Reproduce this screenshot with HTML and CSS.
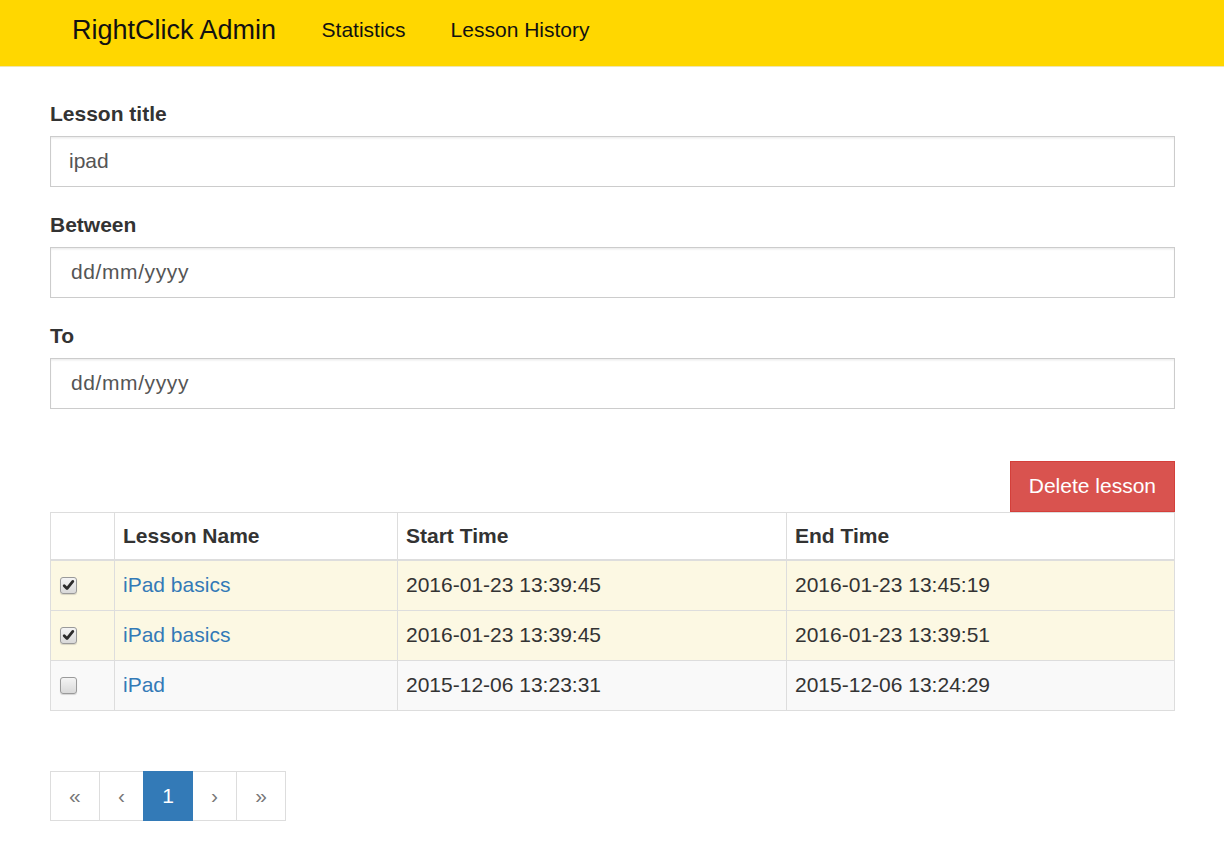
FILE: index.html
```html
<!DOCTYPE html>
<html lang="en">
<head>
<meta charset="utf-8">
<title>RightClick Admin - Lesson History</title>
<link rel="stylesheet" href="styles.css">
</head>
<body>
<nav class="navbar">
  <div class="container navbar-inner">
    <a class="brand" href="#">RightClick Admin</a>
    <a class="nav-link" href="#">Statistics</a>
    <a class="nav-link" href="#">Lesson History</a>
  </div>
</nav>

<main class="container content">
  <form class="search-form">
    <div class="form-group">
      <label class="form-label" for="title">Lesson title</label>
      <input class="form-control" id="title" type="text" value="ipad">
    </div>
    <div class="form-group">
      <label class="form-label" for="between">Between</label>
      <input class="form-control date" id="between" type="text" placeholder="dd/mm/yyyy">
    </div>
    <div class="form-group">
      <label class="form-label" for="to">To</label>
      <input class="form-control date" id="to" type="text" placeholder="dd/mm/yyyy">
    </div>
  </form>

  <div class="actions">
    <button class="btn-danger" type="button">Delete lesson</button>
  </div>

  <table class="lessons">
    <thead>
      <tr>
        <th class="col-check"></th>
        <th class="col-name">Lesson Name</th>
        <th class="col-start">Start Time</th>
        <th class="col-end">End Time</th>
      </tr>
    </thead>
    <tbody>
      <tr class="selected">
        <td class="cell-check"><span class="checkbox checked"><svg viewBox="0 0 17 17" width="17" height="17"><path d="M4.2 8.8 L7 11.6 L12.8 4.4" fill="none" stroke="#2b2b2b" stroke-width="2.8" stroke-linecap="round" stroke-linejoin="round"/></svg></span></td>
        <td><a href="#">iPad basics</a></td>
        <td>2016-01-23 13:39:45</td>
        <td>2016-01-23 13:45:19</td>
      </tr>
      <tr class="selected">
        <td class="cell-check"><span class="checkbox checked"><svg viewBox="0 0 17 17" width="17" height="17"><path d="M4.2 8.8 L7 11.6 L12.8 4.4" fill="none" stroke="#2b2b2b" stroke-width="2.8" stroke-linecap="round" stroke-linejoin="round"/></svg></span></td>
        <td><a href="#">iPad basics</a></td>
        <td>2016-01-23 13:39:45</td>
        <td>2016-01-23 13:39:51</td>
      </tr>
      <tr class="striped">
        <td class="cell-check"><span class="checkbox"></span></td>
        <td><a href="#">iPad</a></td>
        <td>2015-12-06 13:23:31</td>
        <td>2015-12-06 13:24:29</td>
      </tr>
    </tbody>
  </table>

  <nav class="pager-wrap">
    <ul class="pagination">
      <li class="page disabled">&laquo;</li>
      <li class="page disabled">&lsaquo;</li>
      <li class="page active">1</li>
      <li class="page disabled">&rsaquo;</li>
      <li class="page disabled">&raquo;</li>
    </ul>
  </nav>
</main>
</body>
</html>
```
FILE: styles.css
```css
* {
  box-sizing: border-box;
}

html, body {
  margin: 0;
  padding: 0;
  background: #fff;
}

body {
  font-family: "Liberation Sans", Arial, Helvetica, sans-serif;
  font-size: 21px;
  line-height: 30px;
  color: #333;
}

.container {
  width: 1125px;
  margin-left: 50px;
}

/* Navbar */
.navbar {
  background: #ffd700;
  height: 67px;
  border-bottom: 1px solid #efe5b0;
}

.navbar-inner {
  display: flex;
  align-items: flex-start;
  height: 66px;
}

.brand {
  font-size: 27px;
  line-height: 30px;
  padding: 15px 23px 0 22px;
  color: #111;
  text-decoration: none;
}

.nav-link {
  font-size: 21px;
  line-height: 30px;
  padding: 15px 22.5px 0;
  color: #111;
  text-decoration: none;
}

/* Content */
.content {
  padding-top: 31.5px;
}

.search-form {
  margin: 0;
}

.form-group {
  margin-bottom: 23px;
}

.form-label {
  display: block;
  font-weight: bold;
  margin-bottom: 7px;
  line-height: 30px;
}

.form-control {
  display: block;
  width: 100%;
  height: 51px;
  padding: 9px 18px;
  font-family: inherit;
  font-size: 21px;
  line-height: 30px;
  color: #555;
  background: #fff;
  border: 1px solid #ccc;
  border-radius: 0;
  box-shadow: inset 0 1.5px 1.5px rgba(0, 0, 0, 0.075);
  outline: none;
}

.form-control.date {
  padding-left: 20px;
}

.form-control.date::placeholder {
  color: #555;
  opacity: 1;
  letter-spacing: 0.6px;
}

.actions {
  display: flex;
  justify-content: flex-end;
  padding-top: 29px;
}

.btn-danger {
  height: 51px;
  padding: 9px 18px;
  font-family: inherit;
  font-size: 21px;
  line-height: 30px;
  color: #fff;
  background: #d9534f;
  border: 1px solid #d43f3a;
  border-radius: 0;
  cursor: pointer;
}

/* Table */
.lessons {
  width: 100%;
  border-collapse: collapse;
  table-layout: fixed;
  border: 1px solid #ddd;
  margin-bottom: 30px;
}

.lessons th,
.lessons td {
  border: 1px solid #ddd;
  text-align: left;
  vertical-align: middle;
  line-height: 30px;
}

.lessons th {
  padding: 8px 8px;
  font-weight: bold;
  border-bottom: 2px solid #ddd;
}

.lessons td {
  padding: 9.5px 8px;
}

.col-check { width: 64px; }
.col-name { width: 283px; }
.col-start { width: 389px; }

.lessons tr.selected td {
  background: #fcf8e3;
}

.lessons tr.striped td {
  background: #f9f9f9;
}

.lessons a {
  color: #337ab7;
  text-decoration: none;
}

.cell-check {
  padding-left: 9px !important;
}

.checkbox {
  display: block;
  width: 17px;
  height: 17px;
  border: 1px solid #9a9a9a;
  border-radius: 3px;
  background: linear-gradient(#f4f4f4, #d9d9d9);
  box-shadow: 0 1px 1px rgba(0, 0, 0, 0.15);
  position: relative;
}

.checkbox svg {
  position: absolute;
  left: -1px;
  top: -1px;
}

/* Pagination */
.pager-wrap {
  padding-top: 30px;
}

.pagination {
  display: flex;
  list-style: none;
  margin: 0;
  padding: 0;
}

.page {
  padding: 9px 18.1px;
  line-height: 30px;
  border: 1px solid #ddd;
  margin-left: -1px;
  color: #777;
  background: #fff;
}

.page:first-child {
  margin-left: 0;
}

.page.active {
  background: #337ab7;
  border-color: #337ab7;
  color: #fff;
  position: relative;
}
```
